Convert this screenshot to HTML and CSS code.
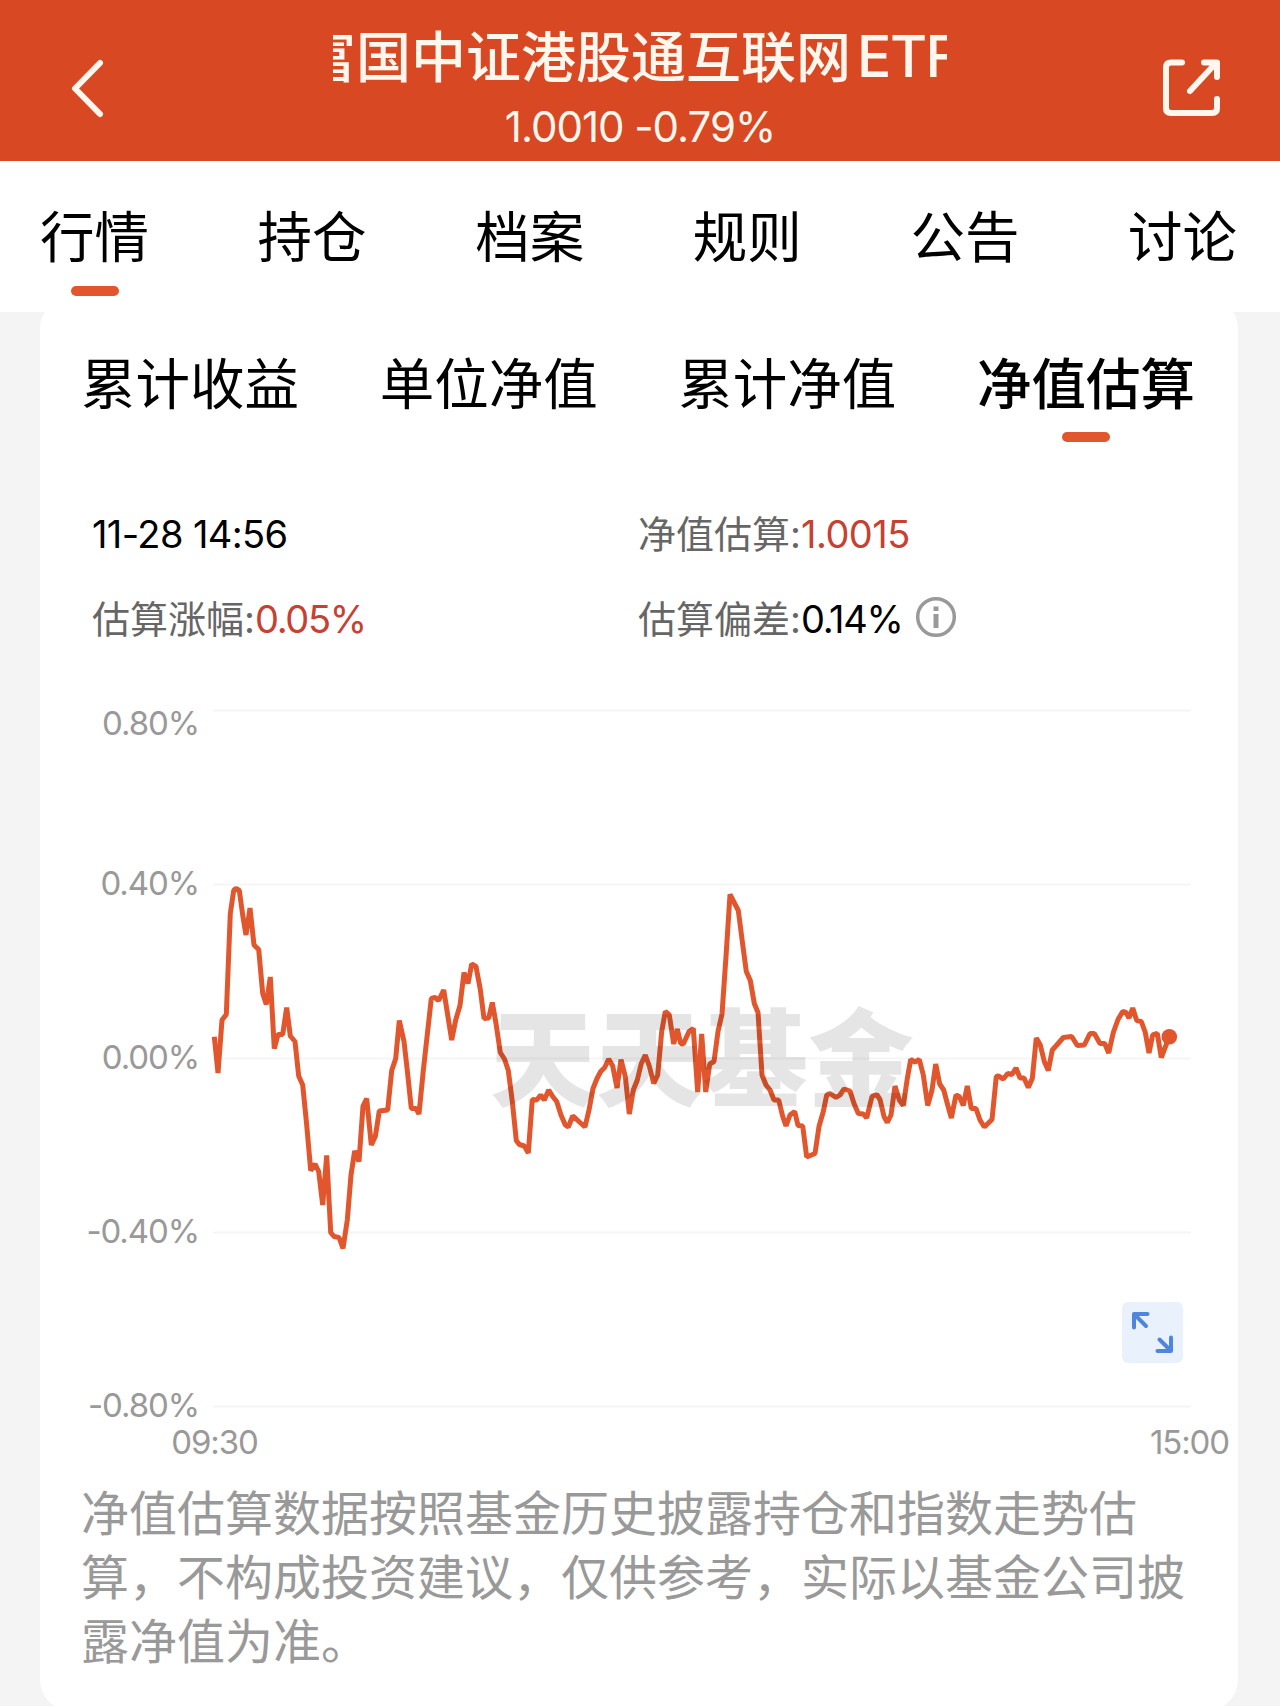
FILE: index.html
```
<!DOCTYPE html>
<html lang="zh-CN">
<head>
    <meta charset="UTF-8">
    <meta name="viewport" content="width=device-width, initial-scale=1.0">
    <title>富国中证港股通互联网ETF</title>
    <link rel="stylesheet" href="styles.css">
</head>
<body>
    <header class="header">
        <svg class="icon-back" viewBox="0 0 36 60" width="36" height="60">
            <path d="M31 5L6 30.500L31 56"/>
        </svg>
        <div class="header-center">
            <h1 class="title"><span>富国中证港股通互联网<b>ETF</b></span></h1>
            <p class="quote">1.0010 -0.79%</p>
        </div>
        <svg class="icon-share" viewBox="0 0 60 60" width="60" height="60">
            <path d="M21 4.500H10Q5 4.500 5 9.500V50Q5 55 10 55H51Q56 55 56 50V41"/>
            <path d="M29 33L54 6M43 4.500H56V19"/>
        </svg>
    </header>

    <nav class="tabs">
        <a class="tab active">行情</a>
        <a class="tab">持仓</a>
        <a class="tab">档案</a>
        <a class="tab">规则</a>
        <a class="tab">公告</a>
        <a class="tab">讨论</a>
    </nav>

    <main class="card">
        <div class="tabs sub-tabs">
            <a class="tab">累计收益</a>
            <a class="tab">单位净值</a>
            <a class="tab">累计净值</a>
            <a class="tab active">净值估算</a>
        </div>

        <div class="info">
            <div class="info-item"><span class="num time">11-28 14:56</span></div>
            <div class="info-item">净值估算:<span class="num value red">1.0015</span></div>
            <div class="info-item">估算涨幅:<span class="num red">0.05%</span></div>
            <div class="info-item">估算偏差:<span class="num">0.14%</span>
                <svg class="icon-info" viewBox="0 0 42 42" width="42" height="42">
                    <circle cx="21" cy="21" r="18.300"/>
                    <path class="stem" d="M21 18V32M21 10.500V15"/>
                </svg>
            </div>
        </div>

        <div class="chart">
            <svg viewBox="40 690 1198 780" width="1198" height="780">
                <g class="grid">
                    <path d="M214 710.500H1190M214 884.500H1190M214 1058.500H1190M214 1232.500H1190M214 1406.500H1190"/>
                </g>
                <g class="y-axis">
                    <text x="199" y="735">0.80%</text>
                    <text x="199" y="895">0.40%</text>
                    <text x="199" y="1069">0.00%</text>
                    <text x="199" y="1243">-0.40%</text>
                    <text x="199" y="1417">-0.80%</text>
                </g>
                <g class="x-axis">
                    <text x="214.500" y="1454">09:30</text>
                    <text x="1189.500" y="1454">15:00</text>
                </g>
                <polyline class="line" points="214.300,1036.700 218,1073 222,1020 226.300,1014.500 230.300,913.500 233.700,890.500 236,888.500 239.300,890.500 242.700,915 246,935 250,908 254,945 258.700,949.500 262.700,993.500 266.300,1004.500 270.300,977 274.300,1048.500 278,1034.500 282.700,1034.500 286.700,1007.500 290.300,1036 295,1041.500 298.700,1076 302.700,1085 306.700,1125 310.700,1170.500 315,1164 318.700,1171.500 322.700,1205 326.700,1155.500 330.700,1232.500 334,1236.500 339,1237.500 343,1248.500 347.300,1220 351,1175 354.700,1151 359,1161.500 363,1106 366.700,1098.500 371.300,1145 375.300,1136.500 379.300,1111 387.700,1110 391.700,1070.500 395.700,1058.500 399.300,1020.500 404,1041.500 407.300,1070.500 411.300,1108.500 416,1108.500 419,1114 423.300,1070.500 431.300,998.500 435,997.500 438.700,1000.500 443.700,990 447.700,1015 451.700,1040 455.700,1020 460,1005.500 464,972.500 468,983.500 471.700,964 476,966.500 480.300,989.500 484,1018.500 488.700,1018 492.300,1002.500 496,1023.500 500.300,1052.500 504.700,1059.500 508.300,1070.500 512.300,1101.500 516.300,1140.500 519.300,1144.500 524.300,1146 528.300,1153 532.300,1099.500 536.700,1100 540.700,1095 544.300,1100 548.700,1090 552.700,1096.500 556.700,1101.500 561,1115 565.300,1125 568.300,1127 572.700,1116 576.700,1119.500 585,1127 589,1110 593,1088.500 597,1078.500 600.700,1071.500 604.700,1067.500 608.700,1059 612.700,1066 617,1088 621,1059.500 625.300,1076.500 629.300,1114 633.300,1090 637.300,1080 641.300,1063.500 645.300,1055 649.300,1066 653.700,1083.500 657.700,1075 661.700,1031.500 665.300,1011.500 669.300,1015 673.700,1044 677.300,1029 680.700,1043.500 683.300,1044 689,1031.500 693.300,1028.500 697.700,1092 701.700,1034 705.700,1092 709.700,1064 714,1061.500 718,1031.500 722,1014 726,956.500 730,894.500 738.300,910.500 742.300,941.500 746.300,971.500 750.300,980.500 754.300,1003.500 758,1012.500 762,1075 766,1085 770,1090 774,1100 778.700,1100 782.700,1116.500 786,1126 790,1115 794.700,1111.500 798,1125.500 802.700,1126 806.700,1157 815,1153.500 819,1126.500 823.300,1111.500 826.700,1095 830,1093.500 836,1097.500 840,1095 844,1089 850,1091 854,1103.500 858.300,1113.500 863.300,1114 866.700,1118 872,1096.500 876.700,1094.500 880,1099.500 884,1116.500 887.300,1122.500 891,1115 895,1086 899.300,1100 903.300,1105.500 907.300,1078.500 910.700,1059.500 915,1062 919.300,1059.500 923.300,1075 927.700,1105.500 932,1090 935.700,1064 939.700,1084 943.700,1090 947.700,1105 951.300,1118 956,1095 959.300,1096.500 963.300,1105.500 967.300,1086 971.300,1108.500 976,1108.500 980,1120 984.300,1127 992,1119.500 996.300,1076.500 998.300,1076 1003.300,1079 1007.700,1073.500 1012,1074.500 1016,1068 1020,1078 1024,1078 1028.300,1087.500 1032.300,1078.500 1036.300,1038 1040.300,1045 1044.300,1061.500 1048.300,1070.500 1052.300,1050 1057.700,1044 1063.300,1037.500 1071.700,1036.500 1077.300,1045.500 1084.300,1045 1090,1033.500 1094.300,1033.500 1100,1043.500 1104.700,1043.500 1108.700,1053 1113.300,1032.500 1118,1019.500 1122.700,1011.500 1126,1012.500 1129,1018 1132.700,1008 1136.700,1020.500 1141.300,1021.500 1145.300,1032.500 1149,1053 1152.700,1035 1157.300,1033.500 1161.300,1057.500 1169.300,1036.700"/>
                <circle class="dot" cx="1169.300" cy="1036.700" r="7.800"/>
                <text class="watermark" x="490" y="1098">天天基金</text>
            </svg>
            <button class="expand">
                <svg viewBox="0 0 61 61" width="61" height="61">
                    <path d="M25.500 12H12V25.500M12.500 12.500L24 24"/>
                    <path d="M35.500 49H49V35.500M48.500 48.500L37.500 37.500"/>
                </svg>
            </button>
        </div>

        <p class="note">净值估算数据按照基金历史披露持仓和指数走势估算，不构成投资建议，仅供参考，实际以基金公司披露净值为准。</p>
    </main>
</body>
</html>
```
FILE: styles.css
```
:root {
    --primary: #d84822;
    --accent: #e1562c;
    --red: #c8402f;
    --gray: #999;
}

* {
    margin: 0;
    padding: 0;
    box-sizing: border-box;
}

body {
    width: 1280px;
    height: 1706px;
    overflow: hidden;
    background: #f4f4f4;
    color: #000;
    font-family: Inter, "Noto Sans CJK SC", sans-serif;
}

svg {
    display: block;
    fill: none;
    stroke-linecap: round;
    stroke-linejoin: round;
}

/* header */
.header {
    display: flex;
    justify-content: space-between;
    height: 161px;
    padding: 0 59px 0 69px;
    background: var(--primary);
    color: #fff6ee;
}

.icon-back,
.icon-share {
    margin-top: 58px;
    stroke: #fff6ee;
    stroke-width: 6;
}

.header-center {
    width: 614px;
    margin-left: 14px;
    text-align: center;
}

.title {
    display: flex;
    height: 70px;
    margin-top: 22px;
    overflow: hidden;
    font-size: 55px;
    font-weight: 500;
    line-height: 70px;
    white-space: nowrap;
}

.title span {
    margin-left: -32px;
}

.title b {
    margin-left: 6px;
    font-size: 57px;
    font-weight: 500;
    letter-spacing: -1.500px;
}

.quote {
    margin-top: 10px;
    font-size: 42px;
    line-height: 50px;
    letter-spacing: -1px;
}

/* tabs */
.tabs {
    position: relative;
    z-index: 1;
    display: flex;
    justify-content: space-between;
    height: 151px;
    padding: 37px 43px 0 40px;
    background: #fff;
}

.tab {
    display: flex;
    flex-direction: column;
    align-items: center;
    font-size: 54.500px;
    line-height: 78px;
}

.tab.active::after {
    content: "";
    width: 48px;
    height: 10px;
    margin-top: 10px;
    border-radius: 5px;
    background: var(--accent);
}

/* card */
.card {
    width: 1198px;
    height: 1412px;
    margin: -14px 0 0 40px;
    border-radius: 30px;
    background: #fff;
}

.sub-tabs {
    height: 195px;
    padding: 47px 43px 0 41px;
    background: none;
}

.sub-tabs .active {
    font-weight: 500;
}

.sub-tabs .active::after {
    margin-top: 9px;
}

.info {
    display: grid;
    grid-template-columns: 546px 1fr;
    grid-auto-rows: 85px;
    height: 197px;
    margin-top: -4px;
    margin-bottom: 4px;
    padding-left: 52px;
}

.info-item {
    display: flex;
    align-items: center;
    color: #666;
    font-size: 38px;
}

.num {
    padding-top: 4px;
    color: #000;
    letter-spacing: -1.300px;
}

.num.time {
    letter-spacing: -0.600px;
}

.num.value {
    letter-spacing: -0.500px;
}

.num.red {
    color: var(--red);
}

.icon-info {
    margin-left: 13px;
    stroke: var(--gray);
    stroke-width: 3.500;
    stroke-linecap: butt;
}

.icon-info .stem {
    stroke-width: 5;
}

/* chart */
.chart {
    position: relative;
    height: 780px;
}

.grid {
    stroke: #f5f5f5;
    stroke-width: 2;
}

.y-axis,
.x-axis {
    fill: var(--gray);
    font-size: 33px;
    letter-spacing: -1.100px;
    text-anchor: end;
}

.x-axis {
    text-anchor: middle;
}

.line {
    stroke: var(--accent);
    stroke-width: 5;
    stroke-linejoin: bevel;
    stroke-linecap: butt;
}

.dot {
    fill: var(--accent);
}

.watermark {
    fill: rgba(0, 0, 0, 0.1);
    font-size: 106px;
    font-weight: 900;
}

.expand {
    position: absolute;
    left: 1082px;
    top: 612px;
    width: 61px;
    height: 61px;
    border: none;
    border-radius: 6px;
    background: #e9f1fd;
}

.expand svg {
    stroke: #5085de;
    stroke-width: 4;
}

.note {
    width: 1120px;
    margin: 12px 0 0 41px;
    color: var(--gray);
    font-size: 48px;
    line-height: 64px;
}
```
